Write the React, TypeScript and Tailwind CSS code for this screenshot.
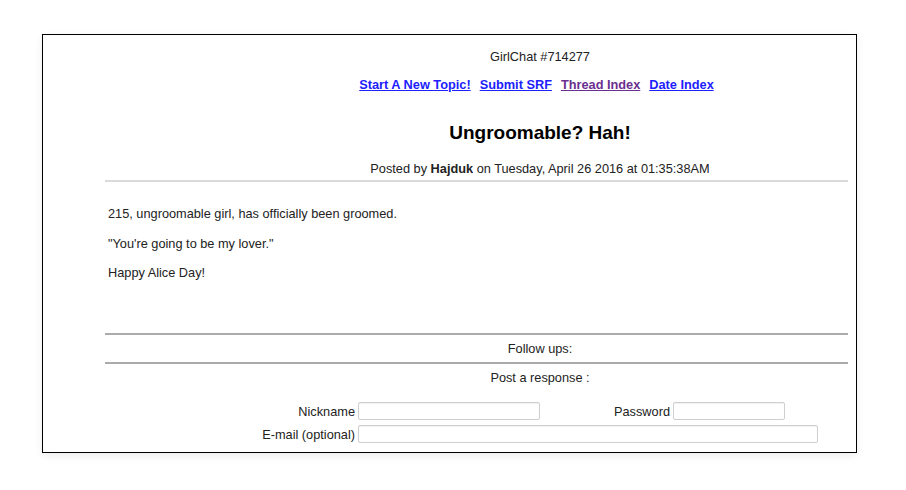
import React from 'react';

const Field = ({ width }: { width: string }) => (
  <input
    type="text"
    className={`${width} h-[18px] rounded-[2px] border border-[#cfcfcf] bg-white shadow-[inset_0_1px_1px_rgba(0,0,0,0.06)] outline-none`}
  />
);

const App = () => {
  return (
    <div className="min-h-[490px] w-[906px] bg-white pt-[34px] pl-[42px] font-['Liberation_Sans',Arial,sans-serif] text-[12.75px] text-[#222]">
      <div className="h-[419px] w-[815px] overflow-hidden border border-black bg-white shadow-[0_3px_8px_rgba(0,0,0,0.07)]">
        <div className="ml-[62px] w-[870px] pt-[14px]">
          <div className="text-center leading-[15px]">GirlChat #714277</div>

          <div className="mt-[13px] flex justify-center gap-[9px] pr-[7px] font-bold leading-[15px]">
            <a href="#" className="text-[#2020ff] underline">Start A New Topic!</a>
            <a href="#" className="text-[#2020ff] underline">Submit SRF</a>
            <a href="#" className="text-[#6a2f8f] underline">Thread Index</a>
            <a href="#" className="text-[#2020ff] underline">Date Index</a>
          </div>

          <h1 className="mt-[30px] text-center text-[19px] font-bold leading-[22px] text-black">
            Ungroomable? Hah!
          </h1>

          <div className="mt-[16.5px] text-center leading-[15px]">
            Posted by <b>Hajduk</b> on Tuesday, April 26 2016 at 01:35:38AM
          </div>

          <div className="mt-[4px] h-[2px] w-[743px] bg-[#dadada]" />

          <div className="mt-[24.5px] flex flex-col gap-[14.5px] pl-[3px] leading-[15px]">
            <p>215, ungroomable girl, has officially been groomed.</p>
            <p>"You're going to be my lover."</p>
            <p>Happy Alice Day!</p>
          </div>

          <div className="mt-[52.5px] h-[2px] w-[743px] bg-[#ababab]" />
          <div className="mt-[6.5px] text-center leading-[15px]">Follow ups:</div>
          <div className="mt-[5.5px] h-[2px] w-[743px] bg-[#ababab]" />
          <div className="mt-[6.5px] text-center leading-[15px]">Post a response :</div>

          <div className="mt-[16.5px] flex items-center">
            <div className="w-[250px] text-right">Nickname</div>
            <div className="ml-[3px]"><Field width="w-[182px]" /></div>
            <div className="w-[130px] text-right">Password</div>
            <div className="ml-[3px]"><Field width="w-[112px]" /></div>
          </div>
          <div className="mt-[4px] flex items-center">
            <div className="w-[250px] text-right">E-mail (optional)</div>
            <div className="ml-[3px]"><Field width="w-[460px]" /></div>
          </div>
        </div>
      </div>
    </div>
  );
};

export default App;
